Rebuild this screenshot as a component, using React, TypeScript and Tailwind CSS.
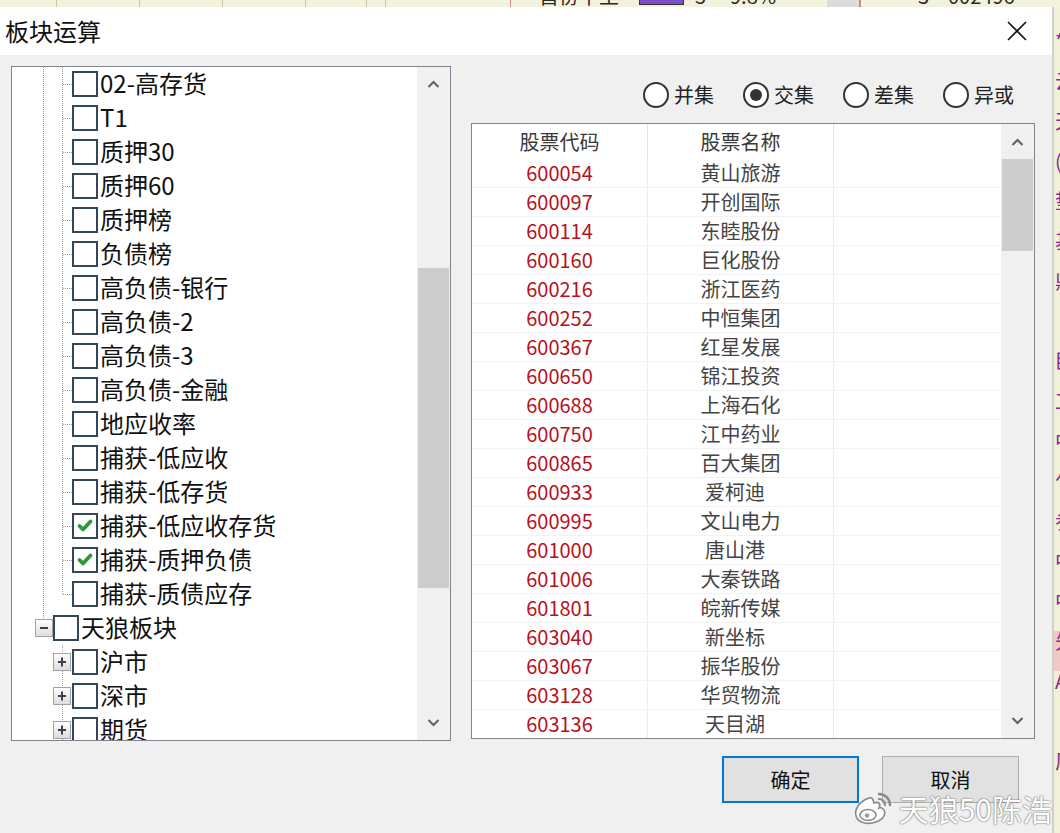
import React from 'react'

type TreeKind = 'leaf' | 'last' | 'group' | 'child'
type TreeRow = { label: string; kind: TreeKind; checked?: boolean }

const TREE: TreeRow[] = [
  { label: '02-高存货', kind: 'leaf' },
  { label: 'T1', kind: 'leaf' },
  { label: '质押30', kind: 'leaf' },
  { label: '质押60', kind: 'leaf' },
  { label: '质押榜', kind: 'leaf' },
  { label: '负债榜', kind: 'leaf' },
  { label: '高负债-银行', kind: 'leaf' },
  { label: '高负债-2', kind: 'leaf' },
  { label: '高负债-3', kind: 'leaf' },
  { label: '高负债-金融', kind: 'leaf' },
  { label: '地应收率', kind: 'leaf' },
  { label: '捕获-低应收', kind: 'leaf' },
  { label: '捕获-低存货', kind: 'leaf' },
  { label: '捕获-低应收存货', kind: 'leaf', checked: true },
  { label: '捕获-质押负债', kind: 'leaf', checked: true },
  { label: '捕获-质债应存', kind: 'last' },
  { label: '天狼板块', kind: 'group' },
  { label: '沪市', kind: 'child' },
  { label: '深市', kind: 'child' },
  { label: '期货', kind: 'child' },
]

const STOCKS: [string, string][] = [
  ['600054', '黄山旅游'],
  ['600097', '开创国际'],
  ['600114', '东睦股份'],
  ['600160', '巨化股份'],
  ['600216', '浙江医药'],
  ['600252', '中恒集团'],
  ['600367', '红星发展'],
  ['600650', '锦江投资'],
  ['600688', '上海石化'],
  ['600750', '江中药业'],
  ['600865', '百大集团'],
  ['600933', '爱柯迪'],
  ['600995', '文山电力'],
  ['601000', '唐山港'],
  ['601006', '大秦铁路'],
  ['601801', '皖新传媒'],
  ['603040', '新坐标'],
  ['603067', '振华股份'],
  ['603128', '华贸物流'],
  ['603136', '天目湖'],
]

const OPS = [
  { label: '并集', on: false },
  { label: '交集', on: true },
  { label: '差集', on: false },
  { label: '异或', on: false },
]

const SIDE_GLYPHS = ['*', '云', '天', '(', '垫', '基', '鼎', '', '臣', '工', '中', '乍', '参', '中', '中', '先', 'A', '', '厂']

const DOT = '#9a9a9a'

function ExpandBox({ x, minus }: { x: number; minus?: boolean }) {
  return (
    <g>
      <defs>
        <linearGradient id="exp" x1="0" y1="0" x2="0" y2="1">
          <stop offset="0" stopColor="#ffffff" />
          <stop offset="1" stopColor="#dcdcdc" />
        </linearGradient>
      </defs>
      <rect x={x + 0.5} y={8.5} width={17} height={17} fill="url(#exp)" stroke="#a3a3a3" />
      <line x1={x + 5} y1={17} x2={x + 13} y2={17} stroke="#3b4150" strokeWidth={2} />
      {!minus && <line x1={x + 9} y1={12.5} x2={x + 9} y2={21.5} stroke="#3b4150" strokeWidth={2} />}
    </g>
  )
}

function Connector({ kind }: { kind: TreeKind }) {
  if (kind === 'group') {
    return (
      <svg width={41} height={34} className="shrink-0">
        <line x1={31.5} y1={0} x2={31.5} y2={9} stroke={DOT} strokeDasharray="1 1" />
        <ExpandBox x={23} minus />
      </svg>
    )
  }
  if (kind === 'child') {
    return (
      <svg width={60} height={34} className="shrink-0">
        <line x1={50.5} y1={0} x2={50.5} y2={34} stroke={DOT} strokeDasharray="1 1" />
        <ExpandBox x={41} />
      </svg>
    )
  }
  return (
    <svg width={60} height={34} className="shrink-0">
      <line x1={31.5} y1={0} x2={31.5} y2={34} stroke={DOT} strokeDasharray="1 1" />
      <line x1={50.5} y1={0} x2={50.5} y2={kind === 'last' ? 17 : 34} stroke={DOT} strokeDasharray="1 1" />
      <line x1={51} y1={17.5} x2={60} y2={17.5} stroke={DOT} strokeDasharray="1 1" />
    </svg>
  )
}

function CheckBox({ checked }: { checked?: boolean }) {
  return (
    <div className="w-[26px] h-[26px] shrink-0 border-2 border-[#33475b] bg-white flex items-center justify-center">
      {checked && (
        <svg width={18} height={18} viewBox="0 0 18 18">
          <path d="M3.5 9 L7 12.5 L14.5 4.5" fill="none" stroke="#2b9a36" strokeWidth={3.8} strokeLinecap="round" strokeLinejoin="round" />
        </svg>
      )}
    </div>
  )
}

function Chevron({ up }: { up?: boolean }) {
  return (
    <svg width={13} height={8} viewBox="0 0 13 8">
      <path d={up ? 'M1.5 7 L6.5 2 L11.5 7' : 'M1.5 1 L6.5 6 L11.5 1'} fill="none" stroke="#606060" strokeWidth={2} />
    </svg>
  )
}

function WeiboLogo() {
  return (
    <svg width={42} height={38} viewBox="0 0 42 38">
      <path
        d="M17 9 C8 12 2 20 4 27 C6 34 16 36 24 33 C32 30 35 24 31 20 C29 18 27 19 27 19 C29 15 27 12 22 14 C21 10 20 8 17 9 Z"
        fill="#ffffff"
        stroke="#8a8a8a"
        strokeWidth={1.6}
      />
      <ellipse cx={16} cy={26} rx={8} ry={5.5} fill="#ffffff" stroke="#8a8a8a" strokeWidth={1.5} />
      <circle cx={15} cy={26.5} r={2.2} fill="#9a9a9a" />
      <path d="M27 5 A11 11 0 0 1 38 16" fill="none" stroke="#8a8a8a" strokeWidth={2.4} strokeLinecap="round" />
      <path d="M27 10 A6 6 0 0 1 33 16" fill="none" stroke="#8a8a8a" strokeWidth={2.2} strokeLinecap="round" />
    </svg>
  )
}

export default function App() {
  return (
    <div className="relative w-[1060px] h-[833px] overflow-hidden bg-[#f1f0d8] font-['Noto_Sans_CJK_SC',sans-serif]">
      {/* application behind the dialog */}
      <div className="flex flex-col h-full">
        <div className="h-[7px] overflow-hidden flex bg-[#f3f2dc] text-[20px] text-[#2a2a2a]">
          <div className="w-[57px] shrink-0 border-r border-[#c9c6a6]" />
          <div className="w-[83px] shrink-0 border-r border-[#c9c6a6]" />
          <div className="w-[83px] shrink-0 border-r border-[#c9c6a6]" />
          <div className="w-[83px] shrink-0 border-r border-[#c9c6a6]" />
          <div className="w-[61px] shrink-0 border-r border-[#c9c6a6]" />
          <div className="w-[19px] shrink-0 border-r border-[#c9c6a6]" />
          <div className="w-[125px] shrink-0 border-r border-[#c98a8a]" />
          <div className="flex-1 h-[28px] -mt-[18px] flex items-center leading-none">
            <span className="ml-[28px] w-[100px]">首份平土</span>
            <span className="w-[45px] h-[18px] bg-[#7a4fc8] border border-[#333]" />
            <span className="ml-[11px] w-[35px]">5</span>
            <span className="w-[97px]">9.8%</span>
            <span className="w-[32px] h-[28px] bg-[#dcdcdc]" />
            <span className="w-[2px] h-[28px] bg-[#c98a8a]" />
            <span className="ml-[57px] w-[30px]">3</span>
            <span>002496</span>
          </div>
        </div>
        <div className="flex-1 flex">
          <div className="w-[1053px] shrink-0" />
          <div className="flex-1 overflow-hidden border-l border-[#d7d3b5] flex flex-col pt-[24px] text-[20px] leading-none text-[#8a2b8a]">
            {SIDE_GLYPHS.map((g, i) => (
              <div key={i} className={'h-[40px] pl-[1px] shrink-0 ' + (g === '先' ? 'bg-[#efc9c6]' : '')}>
                {g}
              </div>
            ))}
          </div>
        </div>
      </div>

      {/* dialog window */}
      <div className="absolute left-0 top-[7px] w-[1053px] h-[830px] flex flex-col border-r border-[#cfcfcf] bg-[#f0f0f0]">
        <div className="h-[48px] shrink-0 bg-white flex items-center justify-between pl-[5px] pr-[25px]">
          <span className="text-[24px] leading-none text-[#111]">板块运算</span>
          <svg width={20} height={20} viewBox="0 0 20 20">
            <path d="M1 1 L19 19 M19 1 L1 19" stroke="#111" strokeWidth={1.6} />
          </svg>
        </div>

        <div className="flex-1 flex gap-[20px] pt-[11px] pl-[11px]">
          {/* tree */}
          <div className="w-[440px] h-[675px] shrink-0 border border-[#7f8590] bg-white flex overflow-hidden">
            <div className="flex-1 flex flex-col">
              {TREE.map((r) => (
                <div key={r.label} className="h-[34px] shrink-0 flex items-center">
                  <Connector kind={r.kind} />
                  <CheckBox checked={r.checked} />
                  <span className="ml-[2px] -mt-[2px] text-[24px] leading-none text-[#111] whitespace-nowrap">{r.label}</span>
                </div>
              ))}
            </div>
            <div className="w-[33px] shrink-0 bg-[#f0f0f0] flex flex-col">
              <div className="h-[34px] shrink-0 flex items-center justify-center">
                <Chevron up />
              </div>
              <div className="h-[167px] shrink-0" />
              <div className="h-[320px] shrink-0 mx-[1px] bg-[#cdcdcd]" />
              <div className="flex-1" />
              <div className="h-[34px] shrink-0 flex items-center justify-center">
                <Chevron />
              </div>
            </div>
          </div>

          {/* right side */}
          <div className="w-[564px] shrink-0 flex flex-col">
            <div className="h-[57px] shrink-0 flex items-center justify-end gap-[29px] pr-[21px]">
              {OPS.map((o) => (
                <div key={o.label} className="flex items-center gap-[5px]">
                  <div className="w-[26px] h-[26px] rounded-full border-2 border-[#333] bg-white flex items-center justify-center">
                    {o.on && <div className="w-[12px] h-[12px] rounded-full bg-[#333]" />}
                  </div>
                  <span className="text-[20px] leading-none text-[#222]">{o.label}</span>
                </div>
              ))}
            </div>

            <div className="h-[616px] shrink-0 border border-[#7f8590] bg-white flex overflow-hidden">
              <div className="flex-1 flex flex-col">
                <div className="h-[35px] shrink-0 flex text-[20px] leading-none text-[#3a3a3a]">
                  <div className="w-[176px] flex items-center justify-center border-r border-[#e4e4e4]">股票代码</div>
                  <div className="w-[186px] flex items-center justify-center border-r border-[#e4e4e4]">股票名称</div>
                  <div className="flex-1" />
                </div>
                {STOCKS.map(([code, name]) => (
                  <div key={code} className="h-[29px] shrink-0 flex text-[20px] leading-none border-b border-[#f2f2f2]">
                    <div className="w-[176px] flex items-center justify-center text-[#b8101c] border-r border-[#ececec]">{code}</div>
                    <div
                      className={
                        'w-[186px] flex items-center justify-center text-[#444] border-r border-[#ececec] ' +
                        (name.length === 3 ? 'pr-[11px]' : '')
                      }
                    >
                      {name}
                    </div>
                    <div className="flex-1" />
                  </div>
                ))}
              </div>
              <div className="w-[33px] shrink-0 bg-[#f0f0f0] flex flex-col">
                <div className="h-[35px] shrink-0 flex items-center justify-center">
                  <Chevron up />
                </div>
                <div className="h-[92px] shrink-0 mx-[1px] bg-[#cdcdcd]" />
                <div className="flex-1" />
                <div className="h-[35px] shrink-0 flex items-center justify-center">
                  <Chevron />
                </div>
              </div>
            </div>

            <div className="mt-[17px] flex justify-end gap-[23px] pr-[16px]">
              <button type="button" className="w-[137px] h-[47px] border-2 border-[#0078d7] bg-[#e1e1e1] text-[20px] leading-none text-[#111]">
                确定
              </button>
              <button type="button" className="w-[137px] h-[47px] border border-[#adadad] bg-[#e1e1e1] text-[20px] leading-none text-[#111]">
                取消
              </button>
            </div>
          </div>
        </div>
      </div>

      {/* watermark */}
      <div className="absolute right-[8px] bottom-[6px] flex items-center gap-[5px]">
        <WeiboLogo />
        <span className="text-[30px] leading-none text-white [text-shadow:0_0_2px_#6b6b6b,0_0_1px_#6b6b6b]">天狼50陈浩</span>
      </div>
    </div>
  )
}
